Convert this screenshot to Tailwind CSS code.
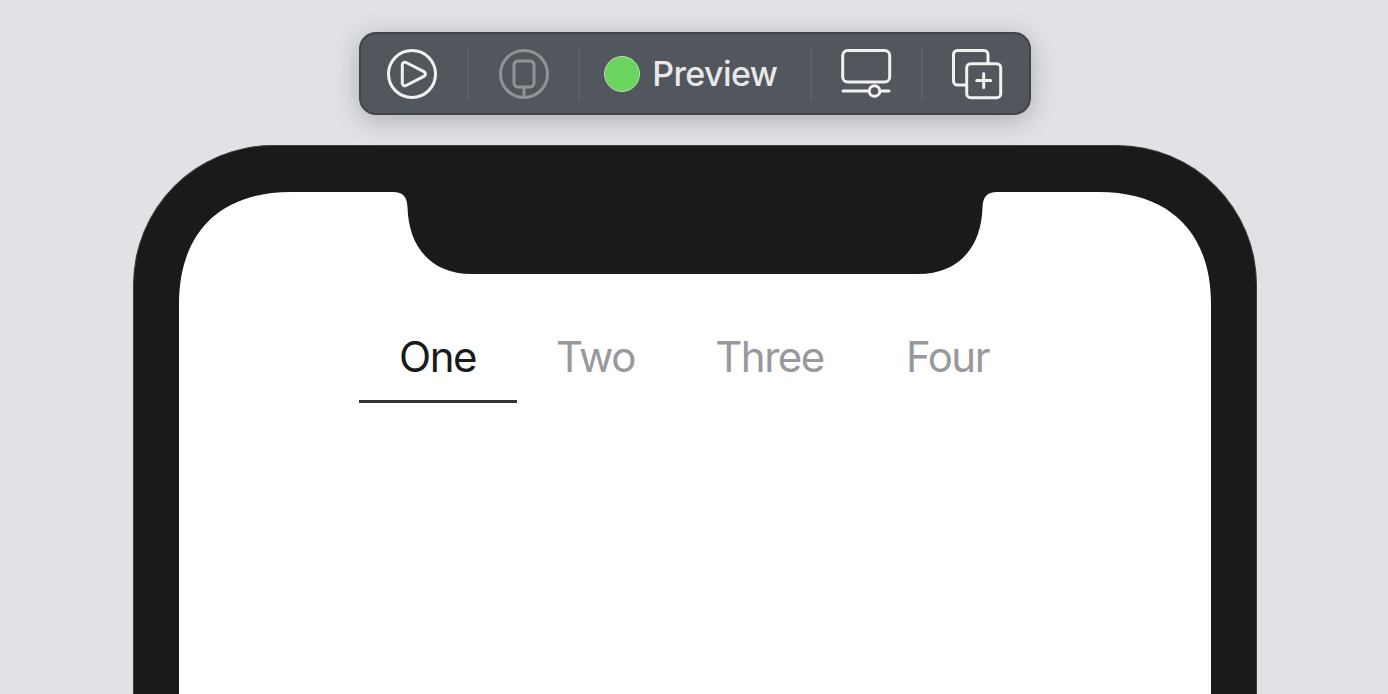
<!DOCTYPE html>
<html lang="en">
<head>
  <meta charset="UTF-8">
  <meta name="viewport" content="width=device-width, initial-scale=1">
  <title>Preview</title>
  <script src="https://cdn.jsdelivr.net/npm/@tailwindcss/browser@4"></script>
</head>
<body class="bg-[#e1e2e6] h-screen overflow-hidden font-['Inter','Liberation_Sans',sans-serif]">
  <div class="h-screen overflow-hidden flex flex-col items-center pt-8 pl-px">

    <!-- Toolbar -->
    <div class="w-[672px] h-[83px] shrink-0 flex items-center rounded-[17px] border-2 border-[#41444b] bg-[#52565d] shadow-[0_5px_26px_rgba(0,0,0,0.23)] text-[#f1f1f2]">
      <button class="w-[107px] pr-[3px] flex justify-center">
        <svg class="w-[52px] h-[52px]" viewBox="0 0 52 52" fill="none" stroke="currentColor" stroke-width="3" stroke-linejoin="round">
          <circle cx="26" cy="26" r="23.5"/>
          <path d="M16.3 16.7v18.6c0 2.1 1.9 3.1 3.8 2.2l17.8-9.1c2.1-1.1 2.1-3.7 0-4.8l-17.8-9.1c-1.9-.9-3.8.1-3.8 2.2z"/>
        </svg>
      </button>
      <div class="w-0.5 h-[52px] bg-[#5d6067]"></div>
      <button class="w-[109px] flex justify-center text-[#909296]">
        <svg class="w-[52px] h-[52px]" viewBox="0 0 52 52" fill="none" stroke="currentColor" stroke-width="3">
          <circle cx="26" cy="26" r="23.5"/>
          <rect x="16" y="13" width="20" height="26" rx="4"/>
          <path d="M26 39v10.5"/>
        </svg>
      </button>
      <div class="w-0.5 h-[52px] bg-[#5d6067]"></div>
      <button class="w-[230px] pl-6 flex items-center">
        <span class="w-9 h-9 rounded-full bg-[#6bd55f] border-[1.5px] border-[#b9dfb6]"></span>
        <span class="ml-3 text-[34px] leading-10 font-medium tracking-[-0.6px] text-[#e8e8ea]">Preview</span>
      </button>
      <div class="w-0.5 h-[52px] bg-[#5d6067]"></div>
      <button class="w-[109px] flex justify-center">
        <svg class="w-[52px] h-[52px]" viewBox="0 0 52 52" fill="none" stroke="currentColor" stroke-width="3" stroke-linecap="round">
          <rect x="2.7" y="2.5" width="47" height="31.5" rx="5"/>
          <path d="M3 43h25.500M40.500 43H49"/>
          <circle cx="34.5" cy="43" r="5.3"/>
        </svg>
      </button>
      <div class="w-0.5 h-[52px] bg-[#5d6067]"></div>
      <button class="w-[106px] pl-0.5 flex justify-center">
        <svg class="w-[52px] h-[52px]" viewBox="0 0 52 52" fill="none" stroke="currentColor" stroke-width="3" stroke-linecap="round">
          <path d="M15.500 37H6.500a4 4 0 0 1-4-4V6.500a4 4 0 0 1 4-4H33a4 4 0 0 1 4 4v9"/>
          <rect x="15.7" y="15.7" width="34" height="34" rx="4"/>
          <path d="M32.700 25.500v14M25.700 32.500h14"/>
        </svg>
      </button>
    </div>

    <!-- Phone -->
    <div class="relative w-[1124px] h-[700px] shrink-0 mt-[30px] rounded-t-[140px] bg-[#1a1a1a] border border-b-0 border-[#3c3c3d]">
      <!-- Screen with notch cut out -->
      <svg class="absolute left-[45px] top-[46px] w-[1032px] h-[655px]" viewBox="0 0 1032 655" fill="#fff">
        <path d="M0 655V112C0 41 41 0 112 0H214C224 0 228 5 228.500 15C229.500 55 252 82 293 82H739C780 82 802.500 55 803.500 15C804 5 808 0 818 0H920C991 0 1032 41 1032 112V655Z"/>
      </svg>

      <!-- Tabs -->
      <nav class="relative ml-[225px] mt-[182px] flex text-[42px] leading-[58px] tracking-[-1.5px] text-[#98989d]">
        <a class="w-[158px] h-[75px] text-center text-[#1a1a1a] border-b-3 border-[#353535]">One</a>
        <a class="w-[158px] text-center">Two</a>
        <a class="w-[190px] text-center">Three</a>
        <a class="w-[166px] text-center">Four</a>
      </nav>
    </div>
  </div>
</body>
</html>
